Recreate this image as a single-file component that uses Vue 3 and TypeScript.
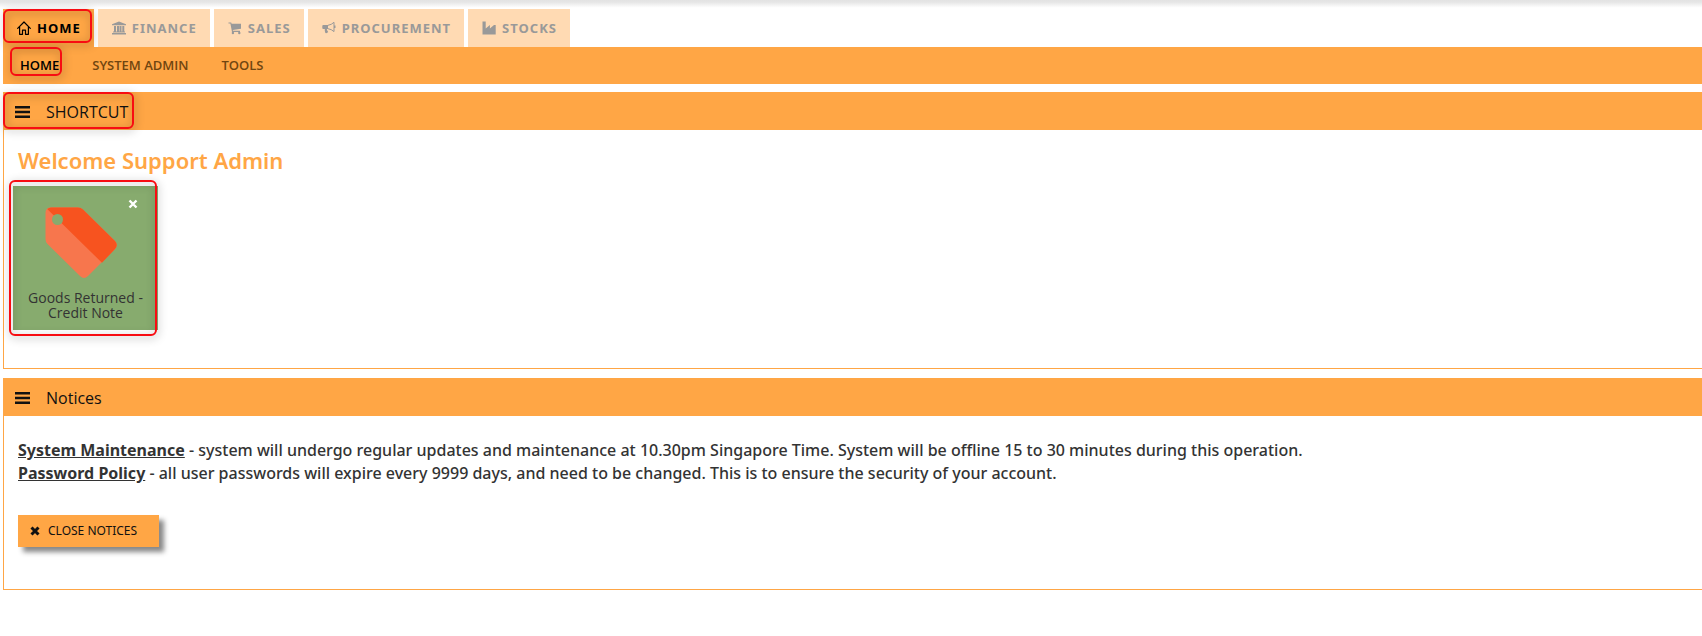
<script setup lang="ts">
import { ref } from 'vue'

type IconName = 'home' | 'bank' | 'cart' | 'horn' | 'factory'

interface Tab {
  label: string
  icon: IconName
}

const tabs: Tab[] = [
  { label: 'HOME', icon: 'home' },
  { label: 'FINANCE', icon: 'bank' },
  { label: 'SALES', icon: 'cart' },
  { label: 'PROCUREMENT', icon: 'horn' },
  { label: 'STOCKS', icon: 'factory' },
]
const subTabs: string[] = ['HOME', 'SYSTEM ADMIN', 'TOOLS']

const activeTab = ref('HOME')
const activeSub = ref('HOME')
const showNotices = ref(true)
const showTile = ref(true)
</script>

<template>
  <div class="page">
    <div class="top-shade"></div>

    <nav class="tabs" aria-label="Modules">
      <button
        v-for="tab in tabs"
        :key="tab.label"
        type="button"
        class="tab"
        :class="{ active: tab.label === activeTab }"
        @click="activeTab = tab.label"
      >
        <svg v-if="tab.icon === 'home'" class="tab-icon" viewBox="0 0 14 14" aria-hidden="true">
          <path d="M0.7 7.4 7 1l6.3 6.4M2.6 6v7.3h2.9V9.2h3v4.1h2.9V6" fill="none" stroke="currentColor" stroke-width="1.2" stroke-linejoin="round" stroke-linecap="round" />
        </svg>
        <svg v-else-if="tab.icon === 'bank'" class="tab-icon" viewBox="0 0 14 14" aria-hidden="true">
          <path d="M7 0.5 14 3.3v1H0v-1zM2 5h2v5.5h1V5h2v5.5h0.5V5h2v5.5h0.8V5h2v5.5h0.7v1H1v-1h1zM0 12h14v1.5H0z" fill="currentColor" />
        </svg>
        <svg v-else-if="tab.icon === 'cart'" class="tab-icon" viewBox="0 0 14 14" aria-hidden="true">
          <path d="M0.5 1.5h2.7l0.4 1.3H13v5L4.8 8.9l0.2 0.9h7v1.2H4L2.4 2.6H0.5z" fill="currentColor" />
          <circle cx="4.9" cy="12" r="1.2" fill="currentColor" />
          <circle cx="11.3" cy="12" r="1.2" fill="currentColor" />
        </svg>
        <svg v-else-if="tab.icon === 'horn'" class="tab-icon" viewBox="0 0 14 14" aria-hidden="true">
          <path d="M0.3 5q0-1 1-1H6v4H4.8q0 1.2 1.4 3Q5 12.6 3.4 12 2.5 10 2.8 8H1.3q-1 0-1-1z" fill="currentColor" />
          <path d="M6 4.3q3.5-0.5 6-3v9.3Q9.5 8.2 6 7.7" fill="none" stroke="currentColor" stroke-width="1" />
          <path d="M12 4.5h1.5v2.6H12z" fill="currentColor" />
        </svg>
        <svg v-else class="tab-icon" viewBox="0 0 14 14" aria-hidden="true">
          <path d="M0.5 0.5h3.2v7l4.2-3.6v3.6L12 3.9h1.7v9.6H0.5z" fill="currentColor" />
        </svg>
        <span>{{ tab.label }}</span>
        <i v-if="tab.label === 'HOME'" class="ring ring-tab"></i>
      </button>
    </nav>

    <nav class="subnav" aria-label="Sections">
      <a
        v-for="item in subTabs"
        :key="item"
        href="#"
        class="sub"
        :class="{ active: item === activeSub }"
        @click.prevent="activeSub = item"
      ><span class="sub-text">{{ item }}</span><i v-if="item === 'HOME'" class="ring ring-sub"></i></a>
    </nav>

    <section class="panel">
      <header class="panel-head">
        <svg class="bars" viewBox="0 0 15 12" aria-hidden="true"><path d="M0 0h15v2.5H0zM0 4.75h15v2.5H0zM0 9.5h15V12H0z" fill="currentColor" /></svg>
        <h2>SHORTCUT</h2>
        <i class="ring ring-head"></i>
      </header>
      <div class="panel-body shortcuts">
        <h1>Welcome Support Admin</h1>
        <div v-if="showTile" class="tile">
          <button type="button" class="tile-close" aria-label="Remove shortcut" @click="showTile = false">
            <svg viewBox="0 0 10 10" aria-hidden="true"><path d="M1.5 1.5l7 7M8.5 1.5l-7 7" stroke="currentColor" stroke-width="2.4" /></svg>
          </button>
          <a href="#" class="tile-link">
            <svg class="tag" viewBox="0 0 72 72" aria-hidden="true">
              <path fill="#f7764d" d="M6 0.5H33q3 0 5 2L70 34q3.5 4 0 8L43 69q-4 4-8 0L2.5 37Q0.5 35 0.5 32V6q0-5.5 5.5-5.5z" />
              <path fill="#f7531f" d="M2.2 2Q4 0.5 6 0.5H33q3 0 5 2L70 34q3.5 4 0 8L57 55.8z" />
              <circle cx="12.5" cy="12.5" r="5.5" fill="#87ab6e" />
            </svg>
            <span>Goods Returned -<br />Credit Note</span>
          </a>
          <i class="ring ring-tile"></i>
        </div>
      </div>
    </section>

    <section v-if="showNotices" class="panel">
      <header class="panel-head">
        <svg class="bars" viewBox="0 0 15 12" aria-hidden="true"><path d="M0 0h15v2.5H0zM0 4.75h15v2.5H0zM0 9.5h15V12H0z" fill="currentColor" /></svg>
        <h2>Notices</h2>
      </header>
      <div class="panel-body notices">
        <p><strong>System Maintenance</strong> - system will undergo regular updates and maintenance at 10.30pm Singapore Time. System will be offline 15 to 30 minutes during this operation.</p>
        <p><strong>Password Policy</strong> - all user passwords will expire every 9999 days, and need to be changed. This is to ensure the security of your account.</p>
        <button type="button" class="close-btn" @click="showNotices = false">
          <svg viewBox="0 0 10 10" aria-hidden="true"><path d="M1.5 1.5l7 7M8.5 1.5l-7 7" stroke="currentColor" stroke-width="3" /></svg>
          <span>CLOSE NOTICES</span>
        </button>
      </div>
    </section>
  </div>
</template>

<style>
body {
  margin: 0;
  background: #fff;
  overflow-x: hidden;
}
</style>

<style scoped>
.page {
  font-family: "Segoe UI", "Open Sans", "Noto Sans", sans-serif;
  color: #333;
  padding-left: 3px;
}
.top-shade {
  height: 9px;
  margin-left: -3px;
  background: linear-gradient(#e3e3e3, #e6e6e6 25%, #fff 85%);
}
.tabs {
  display: flex;
  gap: 4px;
}
.tab {
  position: relative;
  display: flex;
  align-items: center;
  gap: 6px;
  height: 38px;
  padding: 0 13px 0 14px;
  border: 0;
  background: #ffdab3;
  color: #999;
  font-family: "Noto Sans", "Open Sans", sans-serif;
  font-size: 13px;
  font-weight: 700;
  letter-spacing: 1px;
  cursor: pointer;
}
.tab.active {
  background: #ffa645;
  color: #000;
}
.tab-icon {
  width: 14px;
  height: 14px;
  flex: none;
}
.ring {
  position: absolute;
  box-sizing: border-box;
  border: 2px solid #f80c12;
  border-radius: 6px;
  filter: drop-shadow(1px 2px 4px rgba(0, 0, 0, 0.4));
  pointer-events: none;
}
.ring-tab {
  inset: 0 2px 4px 0;
}
.subnav {
  display: flex;
  align-items: center;
  gap: 33px;
  height: 37px;
  padding-left: 17px;
  background: #ffa645;
}
.sub {
  position: relative;
  color: #704510;
  font-size: 13px;
  font-weight: 600;
  line-height: 18px;
  text-decoration: none;
}
.sub-text {
  display: block;
  border-bottom: 1px solid transparent;
  line-height: 17px;
}
.sub.active {
  color: #000;
}
.sub.active .sub-text {
  border-bottom-color: #fff;
}
.ring-sub {
  inset: -10px -3px -1px -10px;
}
.panel {
  margin-top: 8px;
  margin-right: -2px;
}
.panel + .panel {
  margin-top: 9px;
}
.panel-head {
  position: relative;
  display: flex;
  align-items: center;
  gap: 16px;
  box-sizing: border-box;
  height: 38px;
  padding: 2px 0 0 12px;
  background: #ffa645;
  color: #111;
}
.bars {
  width: 15px;
  height: 12px;
}
h2 {
  margin: 0;
  font-size: 16px;
  font-weight: 400;
}
.ring-head {
  width: 131px;
  inset: 0 auto 1px 0;
}
.panel-body {
  border: 1px solid #ffa645;
  border-top: 0;
}
.shortcuts {
  padding: 14px 9px 38px;
}
h1 {
  margin: 0 0 10px;
  padding-left: 5px;
  color: #ffa645;
  font-family: "Noto Sans", "Open Sans", sans-serif;
  font-size: 22px;
  font-weight: 600;
  line-height: 32px;
}
.tile {
  position: relative;
  width: 145px;
  height: 144px;
  background: #87ab6e;
}
.tile-link {
  display: flex;
  flex-direction: column;
  align-items: center;
  gap: 11px;
  padding-top: 21px;
  color: #333;
  font-size: 14px;
  line-height: 15px;
  text-align: center;
  text-decoration: none;
}
.tag {
  width: 72px;
  height: 72px;
  margin-right: 9px;
}
.tile-close {
  position: absolute;
  top: 9px;
  right: 16px;
  display: flex;
  padding: 4px;
  border: 0;
  background: none;
  color: #fff;
  cursor: pointer;
}
.tile-close svg {
  width: 10px;
  height: 10px;
}
.ring-tile {
  inset: -6px 1px -6px -4px;
}
.notices {
  padding: 23px 14px 42px;
}
.notices p {
  margin: 0;
  font-family: "Noto Sans", "Open Sans", sans-serif;
  font-size: 16px;
  font-weight: 500;
  line-height: 23px;
}
.notices strong {
  font-weight: 700;
  text-decoration: underline;
}
.close-btn {
  display: flex;
  align-items: center;
  gap: 8px;
  height: 32px;
  margin-top: 30px;
  padding: 0 22px 1px 12px;
  border: 0;
  background: #ffa645;
  box-shadow: 5px 5px 5px #888;
  color: #111;
  font-family: "Noto Sans", "Open Sans", sans-serif;
  font-size: 12px;
  cursor: pointer;
}
.close-btn svg {
  width: 10px;
  height: 10px;
}
</style>
